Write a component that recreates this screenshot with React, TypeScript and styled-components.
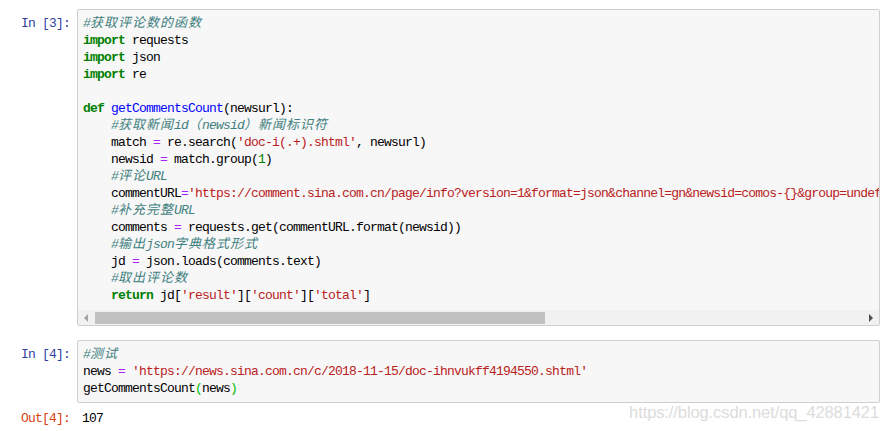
import React from "react"
import styled, { createGlobalStyle } from "styled-components"

const GlobalStyle = createGlobalStyle`
  html, body {
    margin: 0;
    padding: 0;
    background: #ffffff;
  }
  body {
    font-family: "Liberation Mono", "Noto Sans CJK SC", monospace;
  }
`

const mono = `
  font-family: "Liberation Mono", "Noto Sans CJK SC", monospace;
  font-size: 13px;
  letter-spacing: -0.8px;
  line-height: 17px;
`

const Notebook = styled.div`
  position: relative;
  width: 890px;
  height: 431px;
  padding-top: 9px;
  box-sizing: border-box;
  overflow: hidden;
`

const Cell = styled.div<{ $gap: number }>`
  display: flex;
  flex-direction: row;
  align-items: flex-start;
  margin-bottom: ${p => p.$gap}px;
`

const Prompt = styled.div<{ $kind: "in" | "out" }>`
  ${mono}
  flex: none;
  width: 77px;
  box-sizing: border-box;
  padding-right: 7px;
  padding-top: ${p => (p.$kind === "in" ? 6 : 0)}px;
  text-align: right;
  white-space: pre;
  color: ${p => (p.$kind === "in" ? "#303F9F" : "#D84315")};
`

const InputArea = styled.div`
  flex: none;
  width: 803px;
  box-sizing: border-box;
  border: 1px solid #cfcfcf;
  border-radius: 2px;
  background: #f7f7f7;
  overflow: hidden;
`

const Code = styled.pre`
  ${mono}
  margin: 0;
  padding: 5px 5px 5px 5px;
  white-space: pre;
  overflow: hidden;
  color: #000000;
`

const OutputText = styled.pre`
  ${mono}
  margin: 0;
  padding-left: 5px;
  color: #000000;
`

const Kw = styled.span`
  color: #008000;
  font-weight: bold;
`
const Cm = styled.span`
  color: #408080;
  font-style: italic;
`
const Str = styled.span`
  color: #BA2121;
`
const Op = styled.span`
  color: #AA22FF;
`
const Num = styled.span`
  color: #008000;
`
const Fn = styled.span`
  color: #0000FF;
`
const Br = styled.span`
  color: #00bb00;
`
const Cjk = styled.span`
  letter-spacing: 1px;
`

const ScrollBar = styled.div`
  display: flex;
  align-items: stretch;
  height: 15px;
  margin-top: 1px;
  background: #f1f1f1;
`

const ScrollButton = styled.div<{ $dir: "left" | "right"; $active: boolean }>`
  flex: none;
  width: 16px;
  display: flex;
  align-items: center;
  justify-content: center;

  &::before {
    content: "";
    width: 0;
    height: 0;
    border-top: 4px solid transparent;
    border-bottom: 4px solid transparent;
    ${p =>
      p.$dir === "left"
        ? `border-right: 4px solid ${p.$active ? "#505050" : "#a3a3a3"};`
        : `border-left: 4px solid ${p.$active ? "#505050" : "#a3a3a3"};`}
  }
`

const ScrollTrack = styled.div`
  flex: 1;
  display: flex;
  padding: 2px 0 1px 1px;
`

const ScrollThumb = styled.div<{ $width: number }>`
  width: ${p => p.$width}px;
  background: #c1c1c1;
`

const Watermark = styled.div`
  position: absolute;
  right: 11px;
  top: 403px;
  font-family: "Liberation Sans", Arial, sans-serif;
  font-size: 16.5px;
  letter-spacing: -0.1px;
  color: #dcdcdc;
  white-space: nowrap;
`

const cjk = (text: string) =>
  text.split(/([\u3000-\u9fff\uff00-\uffef]+)/).map((part, i) =>
    /[\u3000-\u9fff\uff00-\uffef]/.test(part) ? <Cjk key={i}>{part}</Cjk> : part
  )

const Comment = ({ text }: { text: string }) => <Cm>{cjk(text)}</Cm>

const commentUrl =
  "'https://comment.sina.com.cn/page/info?version=1&format=json&channel=gn&newsid=comos-{}&group=undefined&compress=0&ie=utf-8&oe=utf-8&page=1&page_size=3&t_size=3&h_size=3&thread=1'"

const CellOne = () => (
  <Code>
    <Comment text="#获取评论数的函数" />{"\n"}
    <Kw>import</Kw> requests{"\n"}
    <Kw>import</Kw> json{"\n"}
    <Kw>import</Kw> re{"\n"}
    {"\n"}
    <Kw>def</Kw> <Fn>getCommentsCount</Fn>(newsurl):{"\n"}
    {"    "}<Comment text="#获取新闻id（newsid）新闻标识符" />{"\n"}
    {"    "}match <Op>=</Op> re.search(<Str>'doc-i(.+).shtml'</Str>, newsurl){"\n"}
    {"    "}newsid <Op>=</Op> match.group(<Num>1</Num>){"\n"}
    {"    "}<Comment text="#评论URL" />{"\n"}
    {"    "}commentURL<Op>=</Op><Str>{commentUrl}</Str>{"\n"}
    {"    "}<Comment text="#补充完整URL" />{"\n"}
    {"    "}comments <Op>=</Op> requests.get(commentURL.format(newsid)){"\n"}
    {"    "}<Comment text="#输出json字典格式形式" />{"\n"}
    {"    "}jd <Op>=</Op> json.loads(comments.text){"\n"}
    {"    "}<Comment text="#取出评论数" />{"\n"}
    {"    "}<Kw>return</Kw> jd[<Str>'result'</Str>][<Str>'count'</Str>][<Str>'total'</Str>]
  </Code>
)

const CellTwo = () => (
  <Code>
    <Comment text="#测试" />{"\n"}
    news <Op>=</Op> <Str>'https://news.sina.com.cn/c/2018-11-15/doc-ihnvukff4194550.shtml'</Str>{"\n"}
    getCommentsCount<Br>(</Br>news<Br>)</Br>
  </Code>
)

export default function App() {
  return (
    <>
      <GlobalStyle />
      <Notebook>
        <Cell $gap={14}>
          <Prompt $kind="in">In [3]:</Prompt>
          <InputArea>
            <CellOne />
            <ScrollBar>
              <ScrollButton $dir="left" $active={false} />
              <ScrollTrack>
                <ScrollThumb $width={450} />
              </ScrollTrack>
              <ScrollButton $dir="right" $active={true} />
            </ScrollBar>
          </InputArea>
        </Cell>
        <Cell $gap={7}>
          <Prompt $kind="in">In [4]:</Prompt>
          <InputArea>
            <CellTwo />
          </InputArea>
        </Cell>
        <Cell $gap={0}>
          <Prompt $kind="out">Out[4]:</Prompt>
          <OutputText>107</OutputText>
        </Cell>
        <Watermark>https://blog.csdn.net/qq_42881421</Watermark>
      </Notebook>
    </>
  )
}
